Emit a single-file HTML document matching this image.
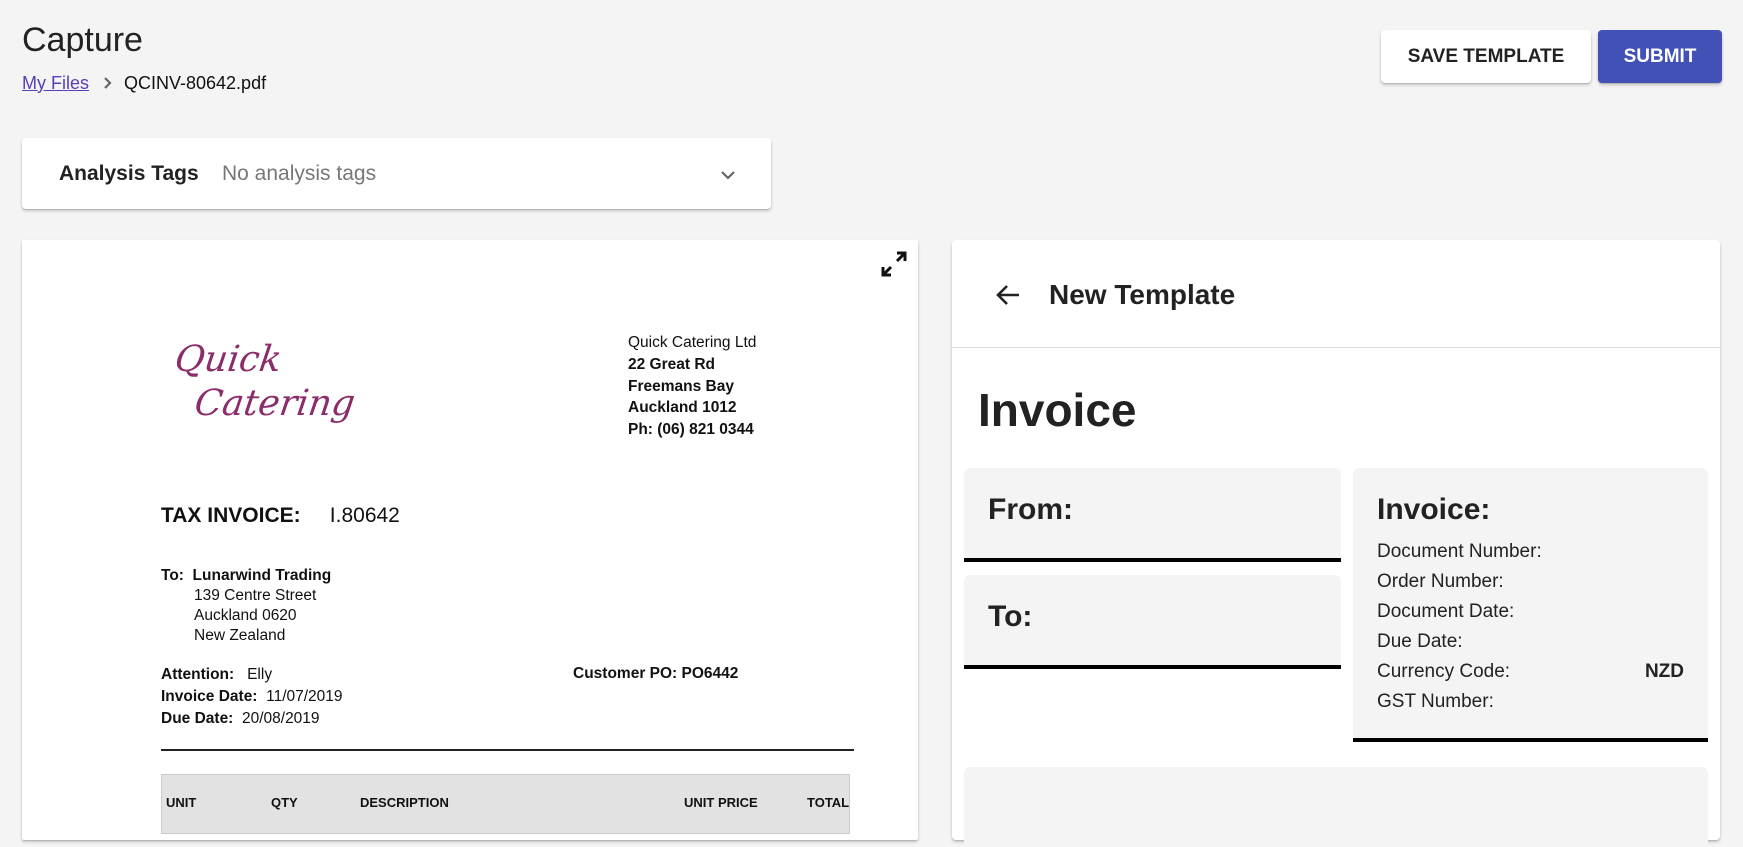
<!DOCTYPE html>
<html><head><meta charset="utf-8"><style>
*{margin:0;padding:0;box-sizing:border-box}
body{width:1743px;height:812px;overflow:hidden;background:#f4f4f4;font-family:"Liberation Sans",sans-serif;color:#222;position:relative}
.a{position:absolute;white-space:nowrap}
.card{position:absolute;background:#fff;border-radius:4px;box-shadow:0 2px 3px rgba(0,0,0,.2),0 1px 1px rgba(0,0,0,.12)}
.doc{font-size:15.5px;color:#111}
.box{position:absolute;background:#f4f4f4;border-radius:6px 6px 0 0;border-bottom:4px solid #000}
.row{position:absolute;left:24px;font-size:19px;color:#222}
</style></head><body>
<div class="a" style="left:22px;top:21px;font-size:34px;color:#222">Capture</div>
<div class="a" style="left:22px;top:73px;font-size:18px"><span style="color:#5b3db5;text-decoration:underline">My Files</span><svg style="margin:0 12px 0 14px;vertical-align:-1px" width="9" height="14" viewBox="0 0 9 14"><path d="M2 2l5 5-5 5" fill="none" stroke="#666" stroke-width="2.2"/></svg><span style="color:#111">QCINV-80642.pdf</span></div>
<div class="card" style="left:1381px;top:30px;width:210px;height:53px;text-align:center;line-height:53px;font-size:19px;font-weight:bold;color:#222">SAVE TEMPLATE</div>
<div class="card" style="left:1598px;top:30px;width:124px;height:53px;background:#4151b5;text-align:center;line-height:53px;font-size:19px;font-weight:bold;color:#fff">SUBMIT</div>

<div class="card" style="left:22px;top:138px;width:749px;height:71px">
<div class="a" style="left:37px;top:24px;font-size:21px;font-weight:bold;color:#222">Analysis Tags</div>
<div class="a" style="left:200px;top:24px;font-size:21px;color:#777">No analysis tags</div>
<svg class="a" style="left:698px;top:32px" width="16" height="10" viewBox="0 0 16 10"><path d="M2 2l6 6 6-6" fill="none" stroke="#666" stroke-width="2.2"/></svg>
</div>

<div class="card" style="left:22px;top:240px;width:896px;height:600px;border-radius:2px">
<svg class="a" style="left:858px;top:10px" width="28" height="28" viewBox="0 0 28 28"><path d="M17 3h8v8M25 3l-8 8M3 17v8h8M3 25l8-8" fill="none" stroke="#111" stroke-width="3"/></svg>
<div class="a" style="left:150px;top:98px;font-family:'DejaVu Serif',serif;font-style:italic;font-size:36px;line-height:44px;color:#8a2d6a;transform:skewX(-8deg)">Quick<br><span style="margin-left:26px">Catering</span></div>
<div class="a doc" style="left:606px;top:92px;line-height:21.8px;font-size:15.5px">Quick Catering Ltd<br><b>22 Great Rd<br>Freemans Bay<br>Auckland 1012<br>Ph: (06) 821 0344</b></div>
<div class="a" style="left:139px;top:264px;font-size:21px;color:#111"><b>TAX INVOICE:</b>&nbsp;&nbsp;&nbsp;&nbsp; I.80642</div>
<div class="a doc" style="left:139px;top:326px;line-height:20px"><b>To:&nbsp; Lunarwind Trading</b><br><span style="margin-left:33px">139 Centre Street</span><br><span style="margin-left:33px">Auckland 0620</span><br><span style="margin-left:33px">New Zealand</span></div>
<div class="a doc" style="left:139px;top:424px;line-height:22px"><b>Attention:</b>&nbsp;&nbsp; Elly<br><b>Invoice Date:</b>&nbsp; 11/07/2019<br><b>Due Date:</b>&nbsp; 20/08/2019</div>
<div class="a doc" style="left:551px;top:425px"><b>Customer PO: PO6442</b></div>
<div class="a" style="left:139px;top:509px;width:693px;height:2px;background:#222"></div>
<div class="a" style="left:139px;top:534px;width:689px;height:60px;background:#e2e2e2;border:1px solid #ccc"></div>
<div class="a" style="top:555px;left:144px;font-size:13px;font-weight:bold;color:#111">UNIT</div>
<div class="a" style="top:555px;left:249px;font-size:13px;font-weight:bold;color:#111">QTY</div>
<div class="a" style="top:555px;left:338px;font-size:13px;font-weight:bold;color:#111">DESCRIPTION</div>
<div class="a" style="top:555px;left:662px;font-size:13px;font-weight:bold;color:#111">UNIT PRICE</div>
<div class="a" style="top:555px;left:785px;font-size:13px;font-weight:bold;color:#111">TOTAL</div>
</div>

<div class="card" style="left:952px;top:240px;width:768px;height:600px">
<svg class="a" style="left:43px;top:43px" width="26" height="24" viewBox="0 0 26 24"><path d="M24 12H3M12 3l-9 9 9 9" fill="none" stroke="#222" stroke-width="2.6"/></svg>
<div class="a" style="left:97px;top:39px;font-size:28px;font-weight:bold;color:#222">New Template</div>
<div class="a" style="left:0;top:107px;width:768px;height:1px;background:#ddd"></div>
<div class="a" style="left:26px;top:143px;font-size:46px;font-weight:bold;color:#222">Invoice</div>
<div class="box" style="left:12px;top:228px;width:377px;height:94px"><div class="a" style="left:24px;top:25px;font-size:30px;font-weight:bold;color:#222">From:</div></div>
<div class="box" style="left:12px;top:335px;width:377px;height:94px"><div class="a" style="left:24px;top:25px;font-size:30px;font-weight:bold;color:#222">To:</div></div>
<div class="box" style="left:401px;top:228px;width:355px;height:274px">
<div class="a" style="left:24px;top:25px;font-size:30px;font-weight:bold;color:#222">Invoice:</div>
<div class="row" style="top:73px">Document Number:</div>
<div class="row" style="top:103px">Order Number:</div>
<div class="row" style="top:133px">Document Date:</div>
<div class="row" style="top:163px">Due Date:</div>
<div class="row" style="top:193px">Currency Code:</div>
<div class="a" style="right:24px;top:193px;font-size:19px;font-weight:bold">NZD</div>
<div class="row" style="top:223px">GST Number:</div>
</div>
<div class="a" style="left:12px;top:527px;width:744px;height:80px;background:#f4f4f4;border-radius:6px"></div>
</div>
</body></html>
